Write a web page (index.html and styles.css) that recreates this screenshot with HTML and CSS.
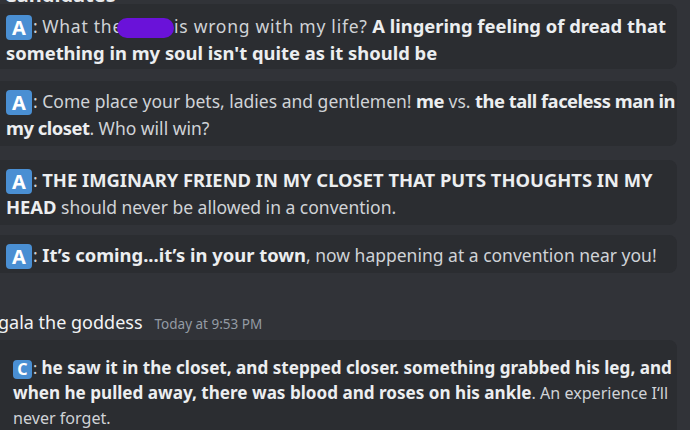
FILE: index.html
```html
<!DOCTYPE html>
<html>
<head>
<meta charset="utf-8">
<link rel="stylesheet" href="styles.css">
</head>
<body>
<div class="chat">
  <div class="cut-heading">Candidates</div>
  <div class="msg msg-first">
    <span class="badge">A</span>: <span class="wide">What the</span><span class="redact"></span><span class="wide">is wrong with my life?</span> <b>A lingering feeling of dread that<br>something in my soul isn't quite as it should be</b>
  </div>
  <div class="msg">
    <span class="badge">A</span>: Come place your bets, ladies and gentlemen! <b class="tight">me</b> vs. <b class="tight">the tall faceless man in<br>my closet</b>. Who will win?
  </div>
  <div class="msg msg-third">
    <span class="badge">A</span>: <b>THE IMGINARY FRIEND IN MY CLOSET THAT PUTS THOUGHTS IN MY<br>HEAD</b> should never be allowed in a convention.
  </div>
  <div class="msg msg-fourth">
    <span class="badge">A</span>: <b>It’s coming...it’s in your town</b>, now happening at a convention near you!
  </div>
  <div class="author">
    <span class="name">gala the goddess</span>
    <span class="time">Today at 9:53 PM</span>
  </div>
  <div class="msg msg-c">
    <span class="badge badge-c">C</span>: <b>he saw it in the closet, and stepped closer. something grabbed his leg, and<br>when he pulled away, there was blood and roses on his ankle</b>. An experience I‘ll<br>never forget.
  </div>
</div>
</body>
</html>
```

FILE: styles.css
```css
html, body {
  margin: 0;
  padding: 0;
  background: #313338;
  height: 100%;
  overflow: hidden;
}

.chat {
  font-family: "Noto Sans", "Open Sans", sans-serif;
  color: #d0d3d7;
  display: flex;
  flex-direction: column;
  gap: 12px;
}

.cut-heading {
  font-weight: 700;
  font-size: 20px;
  line-height: 20px;
  color: #e8e9eb;
  margin-top: -15px;
  margin-bottom: -13.5px;
  padding-left: 4px;
}

.msg {
  background: #2b2d31;
  border-radius: 8px;
  margin: 0 13px 0 -10px;
  padding: 7px 4px 4px 16px;
  font-size: 17.5px;
  line-height: 27px;
  white-space: nowrap;
}

.msg-first {
  padding-top: 9px;
  padding-bottom: 2px;
}

.msg-third {
  margin-top: 2px;
}

.msg-fourth {
  margin-top: -2px;
}

.msg b {
  font-weight: 700;
  font-size: 18.4px;
  line-height: 1;
  color: #eceef0;
}

.msg .tight {
  letter-spacing: -0.5px;
}

.wide {
  letter-spacing: 0.75px;
}

.badge {
  display: inline-block;
  width: 26px;
  height: 25px;
  line-height: 25px;
  text-align: center;
  border-radius: 4px;
  background: #4a8fd3;
  color: #ffffff;
  font-weight: 700;
  font-size: 20px;
  vertical-align: -2px;
  margin-right: 1px;
}

.redact {
  display: inline-block;
  width: 57px;
  height: 20px;
  margin-left: -6px;
  border-radius: 10px;
  background: #6a12d9;
  vertical-align: -5px;
}

.author {
  display: flex;
  align-items: baseline;
  gap: 12px;
  margin-top: 24px;
  margin-left: -2px;
  line-height: 26px;
}

.name {
  font-size: 18px;
  color: #f2f3f5;
}

.time {
  font-size: 13.5px;
  color: #949ba4;
}

.msg-c {
  margin-top: -9px;
  padding: 16px 4px 20px 23px;
  font-size: 16.1px;
  line-height: 25px;
  border-radius: 8px 8px 0 0;
}

.msg-c b {
  font-size: 17.1px;
}

.badge-c {
  width: 19px;
  height: 19px;
  line-height: 19px;
  font-size: 16px;
  vertical-align: -1px;
}
```
